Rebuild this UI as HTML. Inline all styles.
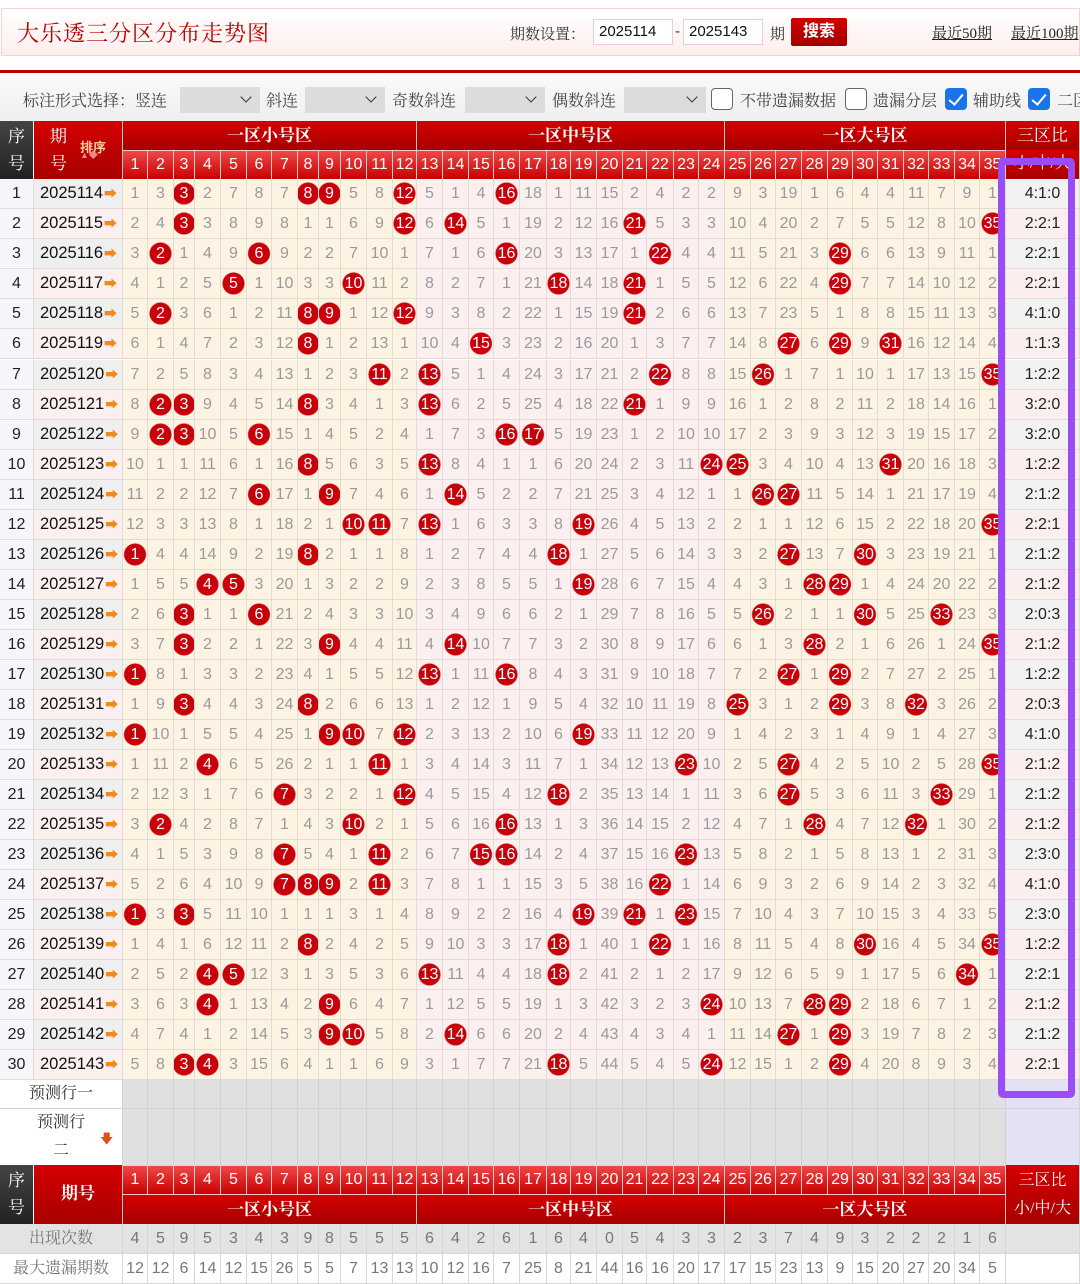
<!DOCTYPE html>
<html><head><meta charset="utf-8">
<style>
*{margin:0;padding:0;box-sizing:border-box}
body{width:1080px;height:1276px;overflow:hidden;background:#fff;font-family:"Liberation Sans","Noto Sans CJK SC",sans-serif;position:relative}
.ser{font-family:"Liberation Serif","Noto Serif CJK SC",serif}
.abs{position:absolute}
#top{position:absolute;left:1px;top:8px;width:1079px;height:48px;border:1px solid #f0d4d4;background:linear-gradient(#fff,#fdeeee)}
#title{left:17px;top:17px;font-size:22px;color:#c00000;letter-spacing:1px}
.lbl{font-size:15px;color:#333}
.inp{height:26px;top:19px;border:1px solid #eccccc;background:#fff;font-size:15px;color:#111;padding:3px 0 0 5px}
#btn{left:791px;top:18px;width:56px;height:28px;background:linear-gradient(#d40000,#a00000);color:#fff;font-weight:bold;font-size:16px;text-align:center;line-height:28px;border-radius:2px}
.lnk{font-size:15px;color:#222;text-decoration:underline;top:22px}
#rl{left:0;top:70px;width:1080px;height:3px;background:#b80000}
#opt{left:0;top:74px;width:1080px;height:47px;background:linear-gradient(#fafafa,#efefef)}
.ot{font-size:16px;color:#444;top:88px}
.sel{top:87px;height:26px;background:#dcdcdc}
.sel:after{content:"";position:absolute;right:10px;top:6px;width:7px;height:7px;border-right:1.5px solid #333;border-bottom:1.5px solid #333;transform:rotate(45deg)}
.cb{top:88px;width:22px;height:22px;border:1.5px solid #666;border-radius:4px;background:#fff}
.cb.on{background:#1a73e8;border-color:#1a73e8}
.cb.on:after{content:"";position:absolute;left:6px;top:2px;width:6px;height:12px;border-right:2.5px solid #fff;border-bottom:2.5px solid #fff;transform:rotate(40deg)}
.gt{display:grid;grid-template-columns:34px 89px 25px 26px 21px 26px 26px 25px 26px 21px 22px 26px 26px 24px 26px 26px 25px 26px 27px 24px 26px 26px 24px 27px 25px 26px 26px 25px 26px 26px 25px 25px 26px 25px 26px 25px 26px 74px}
.h1{position:absolute;left:0;top:121px;width:1080px;height:58px;display:grid;grid-template-columns:34px 89px 294px 308px 281px 74px;grid-template-rows:29px 29px}
.dk{background:linear-gradient(#444,#222);color:#fff;border-right:1px solid #fff}
.rd{background:linear-gradient(#d40000,#a80000);color:#fff;border-right:1px solid #f3c0c0}
.nm{background:linear-gradient(#f04848,#c80000);color:#fff;font-size:16px;text-align:center;line-height:28px;border-right:1px solid #f6caca;border-top:1px solid #f6caca}
.zn{font-size:17px;text-align:center;line-height:29px;font-weight:bold}
.vt{font-size:17px;text-align:center;line-height:27px;padding-top:2px}
.r{position:absolute;left:0;width:1080px;height:30px}
.r>*{display:block;border-right:1px solid #e2dcd4;border-bottom:1px solid #e2dcd4;text-align:center;font-size:16px;line-height:29px;color:#9a9a9a;background-color:#fdf3e3}
.r>*:nth-child(n+15):nth-child(-n+26){background-color:#fbeff0}
.r>*:nth-child(1){background:#f5f5fa;color:#222}
.r>*:nth-child(2){background:#efefef;color:#111;font-size:16.5px;text-align:left;padding-left:6px}
.r>*:nth-child(2):after{content:"➡";color:#f08a1c;font-size:13px;margin-left:1px}
.r.e>*:nth-child(2){background:#fcefef}
.r>*:nth-child(38){background:#f2f2f2;color:#222;font-size:16px}
.r.e>*:nth-child(38){background:#fbeeee}
.r.g{border-bottom:3px solid #cfcfcf}
k{color:#fff!important;background-image:radial-gradient(circle 11.5px at 50% 50%,#c8000a 10.5px,rgba(200,0,10,0) 11.5px)}
.pr{position:absolute;left:0;width:1080px}
.pr>*{border-right:1px solid #d2d2d2;border-bottom:1px solid #d2d2d2;background:#e0e0e0}
#purple{position:absolute;left:998px;top:158px;width:77px;height:940px;border:7px solid #9a4cf5;border-radius:5px}
.bt{position:absolute;left:0;width:1080px;height:30px}
.bt>*{border-right:1px solid #d8d8d8;border-bottom:1px solid #d8d8d8;text-align:center;font-size:16px;line-height:29px;color:#777;background:#e3e3e3}
.bt.w>*{background:#fff;color:#777}
</style></head><body>
<div id="top"></div>
<div id="title" class="abs ser">大乐透三分区分布走势图</div>
<div class="abs lbl ser" style="left:510px;top:23px">期数设置：</div>
<div class="abs inp" style="left:593px;width:80px">2025114</div>
<div class="abs lbl" style="left:675px;top:23px">-</div>
<div class="abs inp" style="left:683px;width:80px">2025143</div>
<div class="abs lbl ser" style="left:770px;top:23px">期</div>
<div id="btn" class="abs">搜索</div>
<div class="abs lnk ser" style="left:932px">最近50期</div>
<div class="abs lnk ser" style="left:1011px;white-space:nowrap">最近100期</div>
<div id="rl" class="abs"></div>
<div id="opt" class="abs"></div>
<div class="abs ot ser" style="left:23px">标注形式选择：竖连</div>
<div class="abs sel" style="left:180px;width:80px"></div>
<div class="abs ot ser" style="left:266px">斜连</div>
<div class="abs sel" style="left:305px;width:80px"></div>
<div class="abs ot ser" style="left:392px">奇数斜连</div>
<div class="abs sel" style="left:465px;width:80px"></div>
<div class="abs ot ser" style="left:552px">偶数斜连</div>
<div class="abs sel" style="left:624px;width:82px"></div>
<div class="abs cb" style="left:711px"></div>
<div class="abs ot ser" style="left:740px">不带遗漏数据</div>
<div class="abs cb" style="left:845px"></div>
<div class="abs ot ser" style="left:873px">遗漏分层</div>
<div class="abs cb on" style="left:945px"></div>
<div class="abs ot ser" style="left:973px">辅助线</div>
<div class="abs cb on" style="left:1028px"></div>
<div class="abs ot ser" style="left:1057px;white-space:nowrap">二区</div>

<div class="h1 ser">
<div class="dk vt" style="grid-row:1/3;grid-column:1">序<br>号</div>
<div class="rd vt" style="grid-row:1/3;grid-column:2;position:relative;text-align:left;padding-left:16px">期<br>号<span style="position:absolute;left:46px;top:12px;font-size:13px;color:#ffd0a0;font-weight:bold;font-family:'Noto Sans CJK SC',sans-serif">排序</span><span style="position:absolute;left:46px;top:30px;font-size:9px;color:#e88;line-height:9px">▲◆</span></div>
<div class="rd zn" style="grid-row:1;grid-column:3">一区小号区</div><div class="rd zn" style="grid-row:1;grid-column:4">一区中号区</div><div class="rd zn" style="grid-row:1;grid-column:5">一区大号区</div><div class="rd zn" style="grid-row:1;grid-column:6;font-weight:normal">三区比</div>
</div>
<div class="gt" style="position:absolute;left:0;top:150px;width:1080px;height:29px">
<div></div><div></div>
<div class="nm">1</div><div class="nm">2</div><div class="nm">3</div><div class="nm">4</div><div class="nm">5</div><div class="nm">6</div><div class="nm">7</div><div class="nm">8</div><div class="nm">9</div><div class="nm">10</div><div class="nm">11</div><div class="nm">12</div><div class="nm">13</div><div class="nm">14</div><div class="nm">15</div><div class="nm">16</div><div class="nm">17</div><div class="nm">18</div><div class="nm">19</div><div class="nm">20</div><div class="nm">21</div><div class="nm">22</div><div class="nm">23</div><div class="nm">24</div><div class="nm">25</div><div class="nm">26</div><div class="nm">27</div><div class="nm">28</div><div class="nm">29</div><div class="nm">30</div><div class="nm">31</div><div class="nm">32</div><div class="nm">33</div><div class="nm">34</div><div class="nm">35</div>
<div class="rd ser" style="text-align:center;font-size:16px;line-height:28px">小/中/大</div>
</div>

<div class="r gt" style="top:179px"><c>1</c><c>2025114</c><c>1</c><c>3</c><k>3</k><c>2</c><c>7</c><c>8</c><c>7</c><k>8</k><k>9</k><c>5</c><c>8</c><k>12</k><c>5</c><c>1</c><c>4</c><k>16</k><c>18</c><c>1</c><c>11</c><c>15</c><c>2</c><c>4</c><c>2</c><c>2</c><c>9</c><c>3</c><c>19</c><c>1</c><c>6</c><c>4</c><c>4</c><c>11</c><c>7</c><c>9</c><c>1</c><c>4:1:0</c></div>
<div class="r gt e" style="top:209px"><c>2</c><c>2025115</c><c>2</c><c>4</c><k>3</k><c>3</c><c>8</c><c>9</c><c>8</c><c>1</c><c>1</c><c>6</c><c>9</c><k>12</k><c>6</c><k>14</k><c>5</c><c>1</c><c>19</c><c>2</c><c>12</c><c>16</c><k>21</k><c>5</c><c>3</c><c>3</c><c>10</c><c>4</c><c>20</c><c>2</c><c>7</c><c>5</c><c>5</c><c>12</c><c>8</c><c>10</c><k>35</k><c>2:2:1</c></div>
<div class="r gt" style="top:239px"><c>3</c><c>2025116</c><c>3</c><k>2</k><c>1</c><c>4</c><c>9</c><k>6</k><c>9</c><c>2</c><c>2</c><c>7</c><c>10</c><c>1</c><c>7</c><c>1</c><c>6</c><k>16</k><c>20</c><c>3</c><c>13</c><c>17</c><c>1</c><k>22</k><c>4</c><c>4</c><c>11</c><c>5</c><c>21</c><c>3</c><k>29</k><c>6</c><c>6</c><c>13</c><c>9</c><c>11</c><c>1</c><c>2:2:1</c></div>
<div class="r gt e" style="top:269px"><c>4</c><c>2025117</c><c>4</c><c>1</c><c>2</c><c>5</c><k>5</k><c>1</c><c>10</c><c>3</c><c>3</c><k>10</k><c>11</c><c>2</c><c>8</c><c>2</c><c>7</c><c>1</c><c>21</c><k>18</k><c>14</c><c>18</c><k>21</k><c>1</c><c>5</c><c>5</c><c>12</c><c>6</c><c>22</c><c>4</c><k>29</k><c>7</c><c>7</c><c>14</c><c>10</c><c>12</c><c>2</c><c>2:2:1</c></div>
<div class="r gt" style="top:299px"><c>5</c><c>2025118</c><c>5</c><k>2</k><c>3</c><c>6</c><c>1</c><c>2</c><c>11</c><k>8</k><k>9</k><c>1</c><c>12</c><k>12</k><c>9</c><c>3</c><c>8</c><c>2</c><c>22</c><c>1</c><c>15</c><c>19</c><k>21</k><c>2</c><c>6</c><c>6</c><c>13</c><c>7</c><c>23</c><c>5</c><c>1</c><c>8</c><c>8</c><c>15</c><c>11</c><c>13</c><c>3</c><c>4:1:0</c></div>
<div class="r gt e g" style="top:329px"><c>6</c><c>2025119</c><c>6</c><c>1</c><c>4</c><c>7</c><c>2</c><c>3</c><c>12</c><k>8</k><c>1</c><c>2</c><c>13</c><c>1</c><c>10</c><c>4</c><k>15</k><c>3</c><c>23</c><c>2</c><c>16</c><c>20</c><c>1</c><c>3</c><c>7</c><c>7</c><c>14</c><c>8</c><k>27</k><c>6</c><k>29</k><c>9</c><k>31</k><c>16</c><c>12</c><c>14</c><c>4</c><c>1:1:3</c></div>
<div class="r gt" style="top:360px"><c>7</c><c>2025120</c><c>7</c><c>2</c><c>5</c><c>8</c><c>3</c><c>4</c><c>13</c><c>1</c><c>2</c><c>3</c><k>11</k><c>2</c><k>13</k><c>5</c><c>1</c><c>4</c><c>24</c><c>3</c><c>17</c><c>21</c><c>2</c><k>22</k><c>8</c><c>8</c><c>15</c><k>26</k><c>1</c><c>7</c><c>1</c><c>10</c><c>1</c><c>17</c><c>13</c><c>15</c><k>35</k><c>1:2:2</c></div>
<div class="r gt e" style="top:390px"><c>8</c><c>2025121</c><c>8</c><k>2</k><k>3</k><c>9</c><c>4</c><c>5</c><c>14</c><k>8</k><c>3</c><c>4</c><c>1</c><c>3</c><k>13</k><c>6</c><c>2</c><c>5</c><c>25</c><c>4</c><c>18</c><c>22</c><k>21</k><c>1</c><c>9</c><c>9</c><c>16</c><c>1</c><c>2</c><c>8</c><c>2</c><c>11</c><c>2</c><c>18</c><c>14</c><c>16</c><c>1</c><c>3:2:0</c></div>
<div class="r gt" style="top:420px"><c>9</c><c>2025122</c><c>9</c><k>2</k><k>3</k><c>10</c><c>5</c><k>6</k><c>15</c><c>1</c><c>4</c><c>5</c><c>2</c><c>4</c><c>1</c><c>7</c><c>3</c><k>16</k><k>17</k><c>5</c><c>19</c><c>23</c><c>1</c><c>2</c><c>10</c><c>10</c><c>17</c><c>2</c><c>3</c><c>9</c><c>3</c><c>12</c><c>3</c><c>19</c><c>15</c><c>17</c><c>2</c><c>3:2:0</c></div>
<div class="r gt e" style="top:450px"><c>10</c><c>2025123</c><c>10</c><c>1</c><c>1</c><c>11</c><c>6</c><c>1</c><c>16</c><k>8</k><c>5</c><c>6</c><c>3</c><c>5</c><k>13</k><c>8</c><c>4</c><c>1</c><c>1</c><c>6</c><c>20</c><c>24</c><c>2</c><c>3</c><c>11</c><k>24</k><k>25</k><c>3</c><c>4</c><c>10</c><c>4</c><c>13</c><k>31</k><c>20</c><c>16</c><c>18</c><c>3</c><c>1:2:2</c></div>
<div class="r gt" style="top:480px"><c>11</c><c>2025124</c><c>11</c><c>2</c><c>2</c><c>12</c><c>7</c><k>6</k><c>17</c><c>1</c><k>9</k><c>7</c><c>4</c><c>6</c><c>1</c><k>14</k><c>5</c><c>2</c><c>2</c><c>7</c><c>21</c><c>25</c><c>3</c><c>4</c><c>12</c><c>1</c><c>1</c><k>26</k><k>27</k><c>11</c><c>5</c><c>14</c><c>1</c><c>21</c><c>17</c><c>19</c><c>4</c><c>2:1:2</c></div>
<div class="r gt e g" style="top:510px"><c>12</c><c>2025125</c><c>12</c><c>3</c><c>3</c><c>13</c><c>8</c><c>1</c><c>18</c><c>2</c><c>1</c><k>10</k><k>11</k><c>7</c><k>13</k><c>1</c><c>6</c><c>3</c><c>3</c><c>8</c><k>19</k><c>26</c><c>4</c><c>5</c><c>13</c><c>2</c><c>2</c><c>1</c><c>1</c><c>12</c><c>6</c><c>15</c><c>2</c><c>22</c><c>18</c><c>20</c><k>35</k><c>2:2:1</c></div>
<div class="r gt" style="top:540px"><c>13</c><c>2025126</c><k>1</k><c>4</c><c>4</c><c>14</c><c>9</c><c>2</c><c>19</c><k>8</k><c>2</c><c>1</c><c>1</c><c>8</c><c>1</c><c>2</c><c>7</c><c>4</c><c>4</c><k>18</k><c>1</c><c>27</c><c>5</c><c>6</c><c>14</c><c>3</c><c>3</c><c>2</c><k>27</k><c>13</c><c>7</c><k>30</k><c>3</c><c>23</c><c>19</c><c>21</c><c>1</c><c>2:1:2</c></div>
<div class="r gt e" style="top:570px"><c>14</c><c>2025127</c><c>1</c><c>5</c><c>5</c><k>4</k><k>5</k><c>3</c><c>20</c><c>1</c><c>3</c><c>2</c><c>2</c><c>9</c><c>2</c><c>3</c><c>8</c><c>5</c><c>5</c><c>1</c><k>19</k><c>28</c><c>6</c><c>7</c><c>15</c><c>4</c><c>4</c><c>3</c><c>1</c><k>28</k><k>29</k><c>1</c><c>4</c><c>24</c><c>20</c><c>22</c><c>2</c><c>2:1:2</c></div>
<div class="r gt" style="top:600px"><c>15</c><c>2025128</c><c>2</c><c>6</c><k>3</k><c>1</c><c>1</c><k>6</k><c>21</c><c>2</c><c>4</c><c>3</c><c>3</c><c>10</c><c>3</c><c>4</c><c>9</c><c>6</c><c>6</c><c>2</c><c>1</c><c>29</c><c>7</c><c>8</c><c>16</c><c>5</c><c>5</c><k>26</k><c>2</c><c>1</c><c>1</c><k>30</k><c>5</c><c>25</c><k>33</k><c>23</c><c>3</c><c>2:0:3</c></div>
<div class="r gt e" style="top:630px"><c>16</c><c>2025129</c><c>3</c><c>7</c><k>3</k><c>2</c><c>2</c><c>1</c><c>22</c><c>3</c><k>9</k><c>4</c><c>4</c><c>11</c><c>4</c><k>14</k><c>10</c><c>7</c><c>7</c><c>3</c><c>2</c><c>30</c><c>8</c><c>9</c><c>17</c><c>6</c><c>6</c><c>1</c><c>3</c><k>28</k><c>2</c><c>1</c><c>6</c><c>26</c><c>1</c><c>24</c><k>35</k><c>2:1:2</c></div>
<div class="r gt" style="top:660px"><c>17</c><c>2025130</c><k>1</k><c>8</c><c>1</c><c>3</c><c>3</c><c>2</c><c>23</c><c>4</c><c>1</c><c>5</c><c>5</c><c>12</c><k>13</k><c>1</c><c>11</c><k>16</k><c>8</c><c>4</c><c>3</c><c>31</c><c>9</c><c>10</c><c>18</c><c>7</c><c>7</c><c>2</c><k>27</k><c>1</c><k>29</k><c>2</c><c>7</c><c>27</c><c>2</c><c>25</c><c>1</c><c>1:2:2</c></div>
<div class="r gt e g" style="top:690px"><c>18</c><c>2025131</c><c>1</c><c>9</c><k>3</k><c>4</c><c>4</c><c>3</c><c>24</c><k>8</k><c>2</c><c>6</c><c>6</c><c>13</c><c>1</c><c>2</c><c>12</c><c>1</c><c>9</c><c>5</c><c>4</c><c>32</c><c>10</c><c>11</c><c>19</c><c>8</c><k>25</k><c>3</c><c>1</c><c>2</c><k>29</k><c>3</c><c>8</c><k>32</k><c>3</c><c>26</c><c>2</c><c>2:0:3</c></div>
<div class="r gt" style="top:720px"><c>19</c><c>2025132</c><k>1</k><c>10</c><c>1</c><c>5</c><c>5</c><c>4</c><c>25</c><c>1</c><k>9</k><k>10</k><c>7</c><k>12</k><c>2</c><c>3</c><c>13</c><c>2</c><c>10</c><c>6</c><k>19</k><c>33</c><c>11</c><c>12</c><c>20</c><c>9</c><c>1</c><c>4</c><c>2</c><c>3</c><c>1</c><c>4</c><c>9</c><c>1</c><c>4</c><c>27</c><c>3</c><c>4:1:0</c></div>
<div class="r gt e" style="top:750px"><c>20</c><c>2025133</c><c>1</c><c>11</c><c>2</c><k>4</k><c>6</c><c>5</c><c>26</c><c>2</c><c>1</c><c>1</c><k>11</k><c>1</c><c>3</c><c>4</c><c>14</c><c>3</c><c>11</c><c>7</c><c>1</c><c>34</c><c>12</c><c>13</c><k>23</k><c>10</c><c>2</c><c>5</c><k>27</k><c>4</c><c>2</c><c>5</c><c>10</c><c>2</c><c>5</c><c>28</c><k>35</k><c>2:1:2</c></div>
<div class="r gt" style="top:780px"><c>21</c><c>2025134</c><c>2</c><c>12</c><c>3</c><c>1</c><c>7</c><c>6</c><k>7</k><c>3</c><c>2</c><c>2</c><c>1</c><k>12</k><c>4</c><c>5</c><c>15</c><c>4</c><c>12</c><k>18</k><c>2</c><c>35</c><c>13</c><c>14</c><c>1</c><c>11</c><c>3</c><c>6</c><k>27</k><c>5</c><c>3</c><c>6</c><c>11</c><c>3</c><k>33</k><c>29</c><c>1</c><c>2:1:2</c></div>
<div class="r gt e" style="top:810px"><c>22</c><c>2025135</c><c>3</c><k>2</k><c>4</c><c>2</c><c>8</c><c>7</c><c>1</c><c>4</c><c>3</c><k>10</k><c>2</c><c>1</c><c>5</c><c>6</c><c>16</c><k>16</k><c>13</c><c>1</c><c>3</c><c>36</c><c>14</c><c>15</c><c>2</c><c>12</c><c>4</c><c>7</c><c>1</c><k>28</k><c>4</c><c>7</c><c>12</c><k>32</k><c>1</c><c>30</c><c>2</c><c>2:1:2</c></div>
<div class="r gt" style="top:840px"><c>23</c><c>2025136</c><c>4</c><c>1</c><c>5</c><c>3</c><c>9</c><c>8</c><k>7</k><c>5</c><c>4</c><c>1</c><k>11</k><c>2</c><c>6</c><c>7</c><k>15</k><k>16</k><c>14</c><c>2</c><c>4</c><c>37</c><c>15</c><c>16</c><k>23</k><c>13</c><c>5</c><c>8</c><c>2</c><c>1</c><c>5</c><c>8</c><c>13</c><c>1</c><c>2</c><c>31</c><c>3</c><c>2:3:0</c></div>
<div class="r gt e g" style="top:870px"><c>24</c><c>2025137</c><c>5</c><c>2</c><c>6</c><c>4</c><c>10</c><c>9</c><k>7</k><k>8</k><k>9</k><c>2</c><k>11</k><c>3</c><c>7</c><c>8</c><c>1</c><c>1</c><c>15</c><c>3</c><c>5</c><c>38</c><c>16</c><k>22</k><c>1</c><c>14</c><c>6</c><c>9</c><c>3</c><c>2</c><c>6</c><c>9</c><c>14</c><c>2</c><c>3</c><c>32</c><c>4</c><c>4:1:0</c></div>
<div class="r gt" style="top:900px"><c>25</c><c>2025138</c><k>1</k><c>3</c><k>3</k><c>5</c><c>11</c><c>10</c><c>1</c><c>1</c><c>1</c><c>3</c><c>1</c><c>4</c><c>8</c><c>9</c><c>2</c><c>2</c><c>16</c><c>4</c><k>19</k><c>39</c><k>21</k><c>1</c><k>23</k><c>15</c><c>7</c><c>10</c><c>4</c><c>3</c><c>7</c><c>10</c><c>15</c><c>3</c><c>4</c><c>33</c><c>5</c><c>2:3:0</c></div>
<div class="r gt e" style="top:930px"><c>26</c><c>2025139</c><c>1</c><c>4</c><c>1</c><c>6</c><c>12</c><c>11</c><c>2</c><k>8</k><c>2</c><c>4</c><c>2</c><c>5</c><c>9</c><c>10</c><c>3</c><c>3</c><c>17</c><k>18</k><c>1</c><c>40</c><c>1</c><k>22</k><c>1</c><c>16</c><c>8</c><c>11</c><c>5</c><c>4</c><c>8</c><k>30</k><c>16</c><c>4</c><c>5</c><c>34</c><k>35</k><c>1:2:2</c></div>
<div class="r gt" style="top:960px"><c>27</c><c>2025140</c><c>2</c><c>5</c><c>2</c><k>4</k><k>5</k><c>12</c><c>3</c><c>1</c><c>3</c><c>5</c><c>3</c><c>6</c><k>13</k><c>11</c><c>4</c><c>4</c><c>18</c><k>18</k><c>2</c><c>41</c><c>2</c><c>1</c><c>2</c><c>17</c><c>9</c><c>12</c><c>6</c><c>5</c><c>9</c><c>1</c><c>17</c><c>5</c><c>6</c><k>34</k><c>1</c><c>2:2:1</c></div>
<div class="r gt e" style="top:990px"><c>28</c><c>2025141</c><c>3</c><c>6</c><c>3</c><k>4</k><c>1</c><c>13</c><c>4</c><c>2</c><k>9</k><c>6</c><c>4</c><c>7</c><c>1</c><c>12</c><c>5</c><c>5</c><c>19</c><c>1</c><c>3</c><c>42</c><c>3</c><c>2</c><c>3</c><k>24</k><c>10</c><c>13</c><c>7</c><k>28</k><k>29</k><c>2</c><c>18</c><c>6</c><c>7</c><c>1</c><c>2</c><c>2:1:2</c></div>
<div class="r gt" style="top:1020px"><c>29</c><c>2025142</c><c>4</c><c>7</c><c>4</c><c>1</c><c>2</c><c>14</c><c>5</c><c>3</c><k>9</k><k>10</k><c>5</c><c>8</c><c>2</c><k>14</k><c>6</c><c>6</c><c>20</c><c>2</c><c>4</c><c>43</c><c>4</c><c>3</c><c>4</c><c>1</c><c>11</c><c>14</c><k>27</k><c>1</c><k>29</k><c>3</c><c>19</c><c>7</c><c>8</c><c>2</c><c>3</c><c>2:1:2</c></div>
<div class="r gt e" style="top:1050px"><c>30</c><c>2025143</c><c>5</c><c>8</c><k>3</k><k>4</k><c>3</c><c>15</c><c>6</c><c>4</c><c>1</c><c>1</c><c>6</c><c>9</c><c>3</c><c>1</c><c>7</c><c>7</c><c>21</c><k>18</k><c>5</c><c>44</c><c>5</c><c>4</c><c>5</c><k>24</k><c>12</c><c>15</c><c>1</c><c>2</c><k>29</k><c>4</c><c>20</c><c>8</c><c>9</c><c>3</c><c>4</c><c>2:2:1</c></div>

<div class="pr gt" style="top:1080px;height:29px">
<div class="ser" style="grid-column:1/3;background:#fff;text-align:center;font-size:16px;line-height:28px;color:#333">预测行一</div>
<div></div><div></div><div></div><div></div><div></div><div></div><div></div><div></div><div></div><div></div><div></div><div></div><div></div><div></div><div></div><div></div><div></div><div></div><div></div><div></div><div></div><div></div><div></div><div></div><div></div><div></div><div></div><div></div><div></div><div></div><div></div><div></div><div></div><div></div><div></div>
<div style="background:#e2e2f4"></div>
</div>
<div class="pr gt" style="top:1109px;height:56px">
<div class="ser" style="grid-column:1/3;background:#fff;text-align:center;font-size:16px;line-height:28px;color:#333;position:relative">预测行<br>二<span style="position:absolute;left:100px;top:16px;color:#e0501a;font-size:13px">🡇</span></div>
<div></div><div></div><div></div><div></div><div></div><div></div><div></div><div></div><div></div><div></div><div></div><div></div><div></div><div></div><div></div><div></div><div></div><div></div><div></div><div></div><div></div><div></div><div></div><div></div><div></div><div></div><div></div><div></div><div></div><div></div><div></div><div></div><div></div><div></div><div></div>
<div style="background:#e2e2f4"></div>
</div>

<div id="purple"></div>

<div class="gt" style="position:absolute;left:0;top:1165px;width:1080px;height:59px;grid-template-rows:29px 30px">
<div class="dk vt ser" style="grid-row:1/3;grid-column:1">序<br>号</div>
<div class="rd ser" style="grid-row:1/3;grid-column:2;text-align:center;line-height:58px;font-size:17px;font-weight:bold">期号</div>
<div class="nm" style="grid-row:1;grid-column:3">1</div><div class="nm" style="grid-row:1;grid-column:4">2</div><div class="nm" style="grid-row:1;grid-column:5">3</div><div class="nm" style="grid-row:1;grid-column:6">4</div><div class="nm" style="grid-row:1;grid-column:7">5</div><div class="nm" style="grid-row:1;grid-column:8">6</div><div class="nm" style="grid-row:1;grid-column:9">7</div><div class="nm" style="grid-row:1;grid-column:10">8</div><div class="nm" style="grid-row:1;grid-column:11">9</div><div class="nm" style="grid-row:1;grid-column:12">10</div><div class="nm" style="grid-row:1;grid-column:13">11</div><div class="nm" style="grid-row:1;grid-column:14">12</div><div class="nm" style="grid-row:1;grid-column:15">13</div><div class="nm" style="grid-row:1;grid-column:16">14</div><div class="nm" style="grid-row:1;grid-column:17">15</div><div class="nm" style="grid-row:1;grid-column:18">16</div><div class="nm" style="grid-row:1;grid-column:19">17</div><div class="nm" style="grid-row:1;grid-column:20">18</div><div class="nm" style="grid-row:1;grid-column:21">19</div><div class="nm" style="grid-row:1;grid-column:22">20</div><div class="nm" style="grid-row:1;grid-column:23">21</div><div class="nm" style="grid-row:1;grid-column:24">22</div><div class="nm" style="grid-row:1;grid-column:25">23</div><div class="nm" style="grid-row:1;grid-column:26">24</div><div class="nm" style="grid-row:1;grid-column:27">25</div><div class="nm" style="grid-row:1;grid-column:28">26</div><div class="nm" style="grid-row:1;grid-column:29">27</div><div class="nm" style="grid-row:1;grid-column:30">28</div><div class="nm" style="grid-row:1;grid-column:31">29</div><div class="nm" style="grid-row:1;grid-column:32">30</div><div class="nm" style="grid-row:1;grid-column:33">31</div><div class="nm" style="grid-row:1;grid-column:34">32</div><div class="nm" style="grid-row:1;grid-column:35">33</div><div class="nm" style="grid-row:1;grid-column:36">34</div><div class="nm" style="grid-row:1;grid-column:37">35</div>
<div class="rd vt ser" style="grid-row:1/3;grid-column:38;font-size:16px;line-height:28px">三区比<br>小/中/大</div>
<div class="rd zn ser" style="grid-row:2;grid-column:3/15;border-top:1px solid #f6caca">一区小号区</div>
<div class="rd zn ser" style="grid-row:2;grid-column:15/27;border-top:1px solid #f6caca">一区中号区</div>
<div class="rd zn ser" style="grid-row:2;grid-column:27/38;border-top:1px solid #f6caca">一区大号区</div>
</div>

<div class="bt gt" style="top:1224px"><div class="ser" style="grid-column:1/3">出现次数</div><div>4</div><div>5</div><div>9</div><div>5</div><div>3</div><div>4</div><div>3</div><div>9</div><div>8</div><div>5</div><div>5</div><div>5</div><div>6</div><div>4</div><div>2</div><div>6</div><div>1</div><div>6</div><div>4</div><div>0</div><div>5</div><div>4</div><div>3</div><div>3</div><div>2</div><div>3</div><div>7</div><div>4</div><div>9</div><div>3</div><div>2</div><div>2</div><div>2</div><div>1</div><div>6</div><div></div></div>
<div class="bt gt w" style="top:1254px"><div class="ser" style="grid-column:1/3">最大遗漏期数</div><div>12</div><div>12</div><div>6</div><div>14</div><div>12</div><div>15</div><div>26</div><div>5</div><div>5</div><div>7</div><div>13</div><div>13</div><div>10</div><div>12</div><div>16</div><div>7</div><div>25</div><div>8</div><div>21</div><div>44</div><div>16</div><div>16</div><div>20</div><div>17</div><div>17</div><div>15</div><div>23</div><div>13</div><div>9</div><div>15</div><div>20</div><div>27</div><div>20</div><div>34</div><div>5</div><div></div></div>
</body></html>
